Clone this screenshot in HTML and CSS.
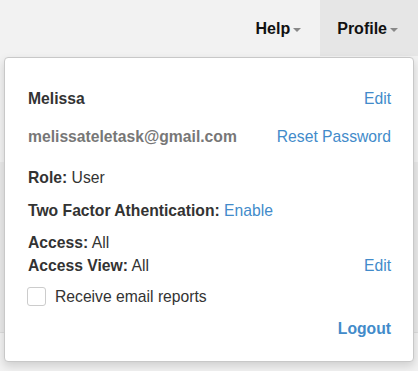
FILE: index.html
```html
<!DOCTYPE html>
<html lang="en">
<head>
    <meta charset="UTF-8">
    <title>Profile</title>
    <link rel="stylesheet" href="styles.css">
</head>
<body>
    <div class="topbar">
        <a class="navItem" href="#">Help<span class="caret"></span></a>
        <a class="navItem open" href="#">Profile<span class="caret"></span></a>
    </div>
    <div class="pageBody">
        <div class="band"></div>
    </div>

    <!-- выпадающее меню профиля -->
    <div class="profileMenu">
        <div class="row first">
            <span class="userName">Melissa</span>
            <a class="link" href="#">Edit</a>
        </div>
        <div class="row email">
            <span class="mail">melissateletask@gmail.com</span>
            <a class="link" href="#">Reset Password</a>
        </div>
        <div class="row role">
            <span><b>Role:</b> User</span>
        </div>
        <div class="row twoFactor">
            <span><b>Two Factor Athentication:</b> <a class="link" href="#">Enable</a></span>
        </div>
        <div class="row access">
            <span><b>Access:</b> All</span>
        </div>
        <div class="row">
            <span><b>Access View:</b> All</span>
            <a class="link" href="#">Edit</a>
        </div>
        <label class="row check">
            <span class="box"></span>
            <span>Receive email reports</span>
        </label>
        <div class="row logoutRow">
            <a class="link logout" href="#">Logout</a>
        </div>
    </div>
</body>
</html>
```

FILE: styles.css
```css
*{
    box-sizing: border-box;
}
body{
    margin: 0;
    background: #f2f2f2;
    font-family: "Liberation Sans", Arial, sans-serif;
    font-size: 15.7px;
    line-height: 23px;
    color: #333;
    height: 371px;
    overflow: hidden;
    position: relative;
}
a{
    text-decoration: none;
}
.topbar{
    height: 56px;
    display: flex;
    justify-content: flex-end;
}
.navItem{
    display: flex;
    align-items: center;
    padding: 0 19px 0 17px;
    font-size: 16px;
    font-weight: bold;
    color: #111;
}
.navItem.open{
    background: #e6e6e6;
    padding-right: 20px;
}
.caret{
    width: 0;
    height: 0;
    margin-left: 3px;
    margin-top: 3px;
    border-left: 4px solid transparent;
    border-right: 4px solid transparent;
    border-top: 4px solid #888;
}
.pageBody{
    padding-top: 106px;
}
.band{
    height: 171px;
    background: #e9e9e9;
    border-bottom: 1px solid #dcdcdc;
}
.profileMenu{
    position: absolute;
    top: 57px;
    left: 4px;
    width: 410px;
    height: 305px;
    background: #fff;
    border: 1px solid #c8c8c8;
    border-radius: 4px;
    box-shadow: 0 4px 10px rgba(0,0,0,0.15);
    padding: 29px 22px 0 23px;
}
.row{
    display: flex;
    justify-content: space-between;
    align-items: center;
    height: 23px;
}
.userName{
    font-weight: bold;
}
.link{
    color: #428bca;
}
.email{
    margin-top: 15px;
}
.mail{
    font-weight: bold;
    color: #777;
}
.role{
    margin-top: 18px;
}
.twoFactor{
    margin-top: 10px;
}
.access{
    margin-top: 9px;
}
.check{
    margin-top: 8px;
    justify-content: flex-start;
    gap: 9px;
}
.box{
    width: 19px;
    height: 19px;
    margin-left: -1px;
    border: 1px solid #ccc;
    border-radius: 3px;
    background: #fff;
}
.logoutRow{
    margin-top: 9px;
    justify-content: flex-end;
}
.logout{
    font-weight: bold;
}
```
